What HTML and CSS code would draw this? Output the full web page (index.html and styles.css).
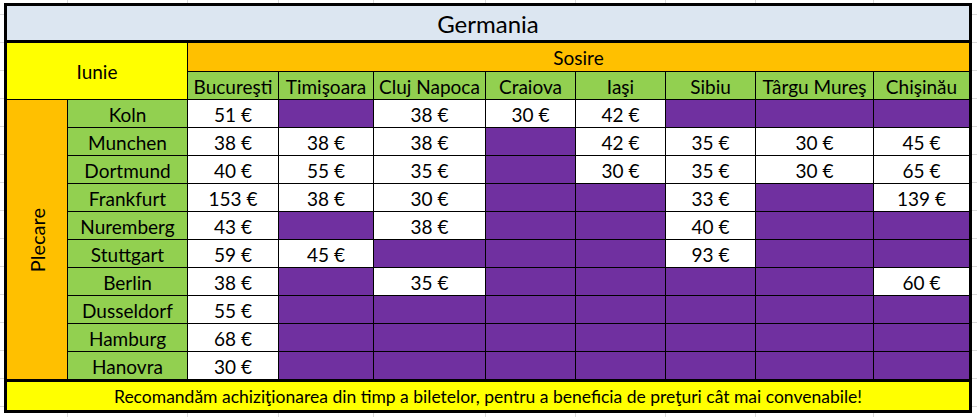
FILE: index.html
```html
<!DOCTYPE html>
<html lang="ro">
<head>
<meta charset="utf-8">
<title>Germania</title>
<link rel="stylesheet" href="styles.css">
</head>
<body>
<div class="sheet">
  <div class="title">Germania</div>
  <div class="grid">
    <div class="c yellow month">Iunie</div>
    <div class="c orange arrive">Sosire</div>
    <div class="c green">Bucureşti</div>
    <div class="c green">Timişoara</div>
    <div class="c green">Cluj Napoca</div>
    <div class="c green">Craiova</div>
    <div class="c green">Iaşi</div>
    <div class="c green">Sibiu</div>
    <div class="c green">Târgu Mureş</div>
    <div class="c green">Chişinău</div>

    <div class="c orange depart"><span class="vert">Plecare</span></div>

    <div class="c green">Koln</div>
    <div class="c w">51 €</div><div class="c p"></div><div class="c w">38 €</div><div class="c w">30 €</div><div class="c w">42 €</div><div class="c p"></div><div class="c p"></div><div class="c p"></div>

    <div class="c green">Munchen</div>
    <div class="c w">38 €</div><div class="c w">38 €</div><div class="c w">38 €</div><div class="c p"></div><div class="c w">42 €</div><div class="c w">35 €</div><div class="c w">30 €</div><div class="c w">45 €</div>

    <div class="c green">Dortmund</div>
    <div class="c w">40 €</div><div class="c w">55 €</div><div class="c w">35 €</div><div class="c p"></div><div class="c w">30 €</div><div class="c w">35 €</div><div class="c w">30 €</div><div class="c w">65 €</div>

    <div class="c green">Frankfurt</div>
    <div class="c w">153 €</div><div class="c w">38 €</div><div class="c w">30 €</div><div class="c p"></div><div class="c p"></div><div class="c w">33 €</div><div class="c p"></div><div class="c w">139 €</div>

    <div class="c green">Nuremberg</div>
    <div class="c w">43 €</div><div class="c p"></div><div class="c w">38 €</div><div class="c p"></div><div class="c p"></div><div class="c w">40 €</div><div class="c p"></div><div class="c p"></div>

    <div class="c green">Stuttgart</div>
    <div class="c w">59 €</div><div class="c w">45 €</div><div class="c p"></div><div class="c p"></div><div class="c p"></div><div class="c w">93 €</div><div class="c p"></div><div class="c p"></div>

    <div class="c green">Berlin</div>
    <div class="c w">38 €</div><div class="c p"></div><div class="c w">35 €</div><div class="c p"></div><div class="c p"></div><div class="c p"></div><div class="c p"></div><div class="c w">60 €</div>

    <div class="c green">Dusseldorf</div>
    <div class="c w">55 €</div><div class="c p"></div><div class="c p"></div><div class="c p"></div><div class="c p"></div><div class="c p"></div><div class="c p"></div><div class="c p"></div>

    <div class="c green">Hamburg</div>
    <div class="c w">68 €</div><div class="c p"></div><div class="c p"></div><div class="c p"></div><div class="c p"></div><div class="c p"></div><div class="c p"></div><div class="c p"></div>

    <div class="c green">Hanovra</div>
    <div class="c w">30 €</div><div class="c p"></div><div class="c p"></div><div class="c p"></div><div class="c p"></div><div class="c p"></div><div class="c p"></div><div class="c p"></div>
  </div>
  <div class="footer">Recomandăm achiziţionarea din timp a biletelor, pentru a beneficia de preţuri cât mai convenabile!</div>
</div>
</body>
</html>
```

FILE: styles.css
```css
html, body {
  margin: 0;
  padding: 0;
}

body {
  padding: 3px 0 0 4px;
  width: 977px;
  height: 417px;
  box-sizing: border-box;
  background-color: #ffffff;
  background-image:
    repeating-linear-gradient(180deg, transparent 0, transparent 14px, #dadada 14px, #dadada 15px, transparent 15px, transparent 28px),
    linear-gradient(90deg,
      transparent 0, transparent 67px, #dadada 67px, #dadada 68px,
      transparent 68px, transparent 187px, #dadada 187px, #dadada 188px,
      transparent 188px, transparent 278px, #dadada 278px, #dadada 279px,
      transparent 279px, transparent 373px, #dadada 373px, #dadada 374px,
      transparent 374px, transparent 485px, #dadada 485px, #dadada 486px,
      transparent 486px, transparent 575px, #dadada 575px, #dadada 576px,
      transparent 576px, transparent 665px, #dadada 665px, #dadada 666px,
      transparent 666px, transparent 755px, #dadada 755px, #dadada 756px,
      transparent 756px, transparent 873px, #dadada 873px, #dadada 874px,
      transparent 874px, transparent 100%);
  font-family: Lato, "Open Sans", sans-serif;
  color: #000;
  overflow: hidden;
}

.sheet {
  width: 968px;
  box-sizing: border-box;
  border: 3px solid #000;
  background: #000;
}

.title {
  height: 37px;
  box-sizing: border-box;
  border-bottom: 3px solid #000;
  background: #dce6f1;
  display: flex;
  align-items: center;
  justify-content: center;
  font-size: 24px;
  padding-top: 1px;
}

.grid {
  display: grid;
  grid-template-columns: 60px 119px 90px 94px 111px 89px 89px 89px 117px 95px;
  grid-template-rows: 28px 27px repeat(10, 27px);
  gap: 1px;
  background: #000;
}

.c {
  display: flex;
  align-items: center;
  justify-content: center;
  font-size: 19px;
  line-height: 1;
  padding-top: 1px;
  white-space: nowrap;
}

.yellow { background: #ffff00; }
.orange { background: #ffc000; }
.green { background: #92d050; }
.w { background: #ffffff; }
.p { background: #7030a0; }

.month {
  grid-column: 1 / 3;
  grid-row: 1 / 3;
}

.arrive {
  grid-column: 3 / 11;
  grid-row: 1;
}

.depart {
  grid-column: 1;
  grid-row: 3 / 13;
}

.vert {
  writing-mode: vertical-rl;
  transform: rotate(180deg);
  font-size: 20px;
}

.footer {
  height: 31px;
  box-sizing: border-box;
  border-top: 3px solid #000;
  background: #ffff00;
  display: flex;
  align-items: center;
  justify-content: center;
  font-size: 17.5px;
  white-space: nowrap;
}
```
